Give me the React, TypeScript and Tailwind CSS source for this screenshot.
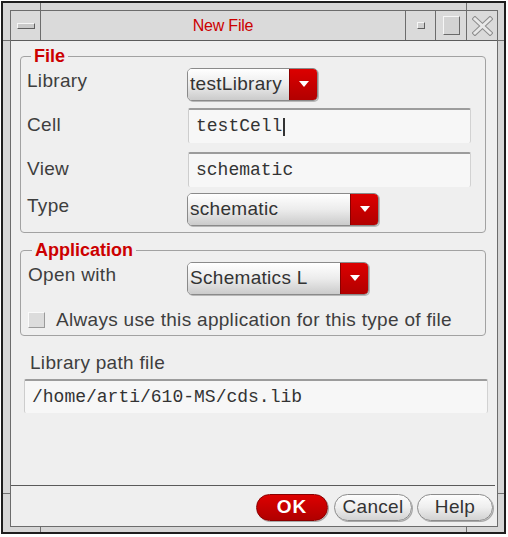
import type { ReactNode } from "react";

const sans = "font-['Liberation_Sans',Arial,sans-serif]";
const mono = "font-['Liberation_Mono','Courier_New',monospace]";

function Combo({ value, className }: { value: string; className: string }) {
  return (
    <div
      className={`flex h-[33px] overflow-hidden rounded-[5px] border border-[#8a8a8a] shadow-[1px_1px_0_#b8b8b8] ${className}`}
    >
      <div className="flex flex-1 items-center bg-linear-to-b from-[#ffffff] via-[#ececec] to-[#cbcbcb] pl-[2px] text-[19px] tracking-[0.3px] text-[#333]">
        {value}
      </div>
      <div className="flex w-[28px] items-center justify-center border-l border-[#8a0000] bg-linear-to-b from-[#dc0000] to-[#b20000]">
        <svg width="10" height="6" viewBox="0 0 10 6" className="-mt-[2px]">
          <path d="M0 0h10L5 6z" fill="#fff" />
        </svg>
      </div>
    </div>
  );
}

function Field({ children, className }: { children: ReactNode; className: string }) {
  return (
    <div
      className={`flex items-center rounded-[2px] border-t-2 border-r border-l border-t-[#9c9c9c] border-r-[#d2d2d2] border-l-[#cdcdcd] bg-[#f7f7f7] pl-[7px] text-[18px] text-[#333] ${mono} ${className}`}
    >
      {children}
    </div>
  );
}

function Legend({ children }: { children: string }) {
  return (
    <legend className="ml-[4px] px-[3px] text-[18px] leading-[20px] font-bold text-[#cc0000]">{children}</legend>
  );
}

function Row({ label, children, className }: { label: string; children: ReactNode; className: string }) {
  return (
    <div className={`flex items-center ${className}`}>
      <span className="w-[160px] text-[19px] tracking-[0.3px] text-[#3e3e3e]">{label}</span>
      {children}
    </div>
  );
}

function ComboRow({ label, children, className }: { label: string; children: ReactNode; className: string }) {
  return (
    <div className={`flex items-center ${className}`}>
      <span className="w-[160px] pb-[7px] text-[19px] tracking-[0.3px] text-[#3e3e3e]">{label}</span>
      {children}
    </div>
  );
}

function PillButton({ label, className }: { label: string; className: string }) {
  return (
    <div
      className={`flex h-[27px] items-center justify-center rounded-full border border-[#8c8c8c] bg-linear-to-b from-[#fdfdfd] via-[#eeeeee] to-[#d2d2d2] text-[19px] tracking-[0.3px] text-[#333] shadow-[1px_1px_0_#a8a8a8] ${className}`}
    >
      {label}
    </div>
  );
}

export default function App() {
  return (
    <div className={`h-[537px] w-[508px] bg-white pt-[1px] pl-[1px] ${sans}`}>
      <div className="relative flex h-[533px] w-[505px] flex-col border-2 border-[#1e1e1e] bg-[#d6d6d6] pt-[7px] pr-[6px] pb-[5px] pl-[7px]">
        {/* frame resize handle ticks */}
        <span className="absolute top-0 left-[37px] h-[7px] w-px bg-[#707070]" />
        <span className="absolute top-0 left-[463px] h-[7px] w-px bg-[#707070]" />
        <span className="absolute bottom-0 left-[37px] h-[5px] w-px bg-[#707070]" />
        <span className="absolute bottom-0 left-[463px] h-[5px] w-px bg-[#707070]" />
        <span className="absolute top-[37px] left-0 h-px w-[7px] bg-[#707070]" />
        <span className="absolute top-[490px] left-0 h-px w-[7px] bg-[#707070]" />
        <span className="absolute top-[37px] right-0 h-px w-[6px] bg-[#707070]" />
        <span className="absolute top-[490px] right-0 h-px w-[6px] bg-[#707070]" />

        <div className="flex flex-1 flex-col border border-[#6c6c6c]">
          {/* title bar */}
          <div className="flex h-[30px] border-b border-[#5c5c5c] bg-[#dadada]">
            <div className="flex w-[30px] items-center justify-center border-r border-[#6c6c6c]">
              <div className="h-[6px] w-[18px] border-t border-l border-t-[#f6f6f6] border-l-[#f6f6f6] border-r border-b border-r-[#5e5e5e] border-b-[#5e5e5e] bg-[#c9c9c9]" />
            </div>
            <div className="flex flex-1 items-center justify-center text-[16px] tracking-[-0.2px] text-[#cc0000]">
              New File
            </div>
            <div className="flex w-[30px] items-center justify-center border-l border-[#6c6c6c]">
              <div className="h-[7px] w-[8px] border-t border-l border-t-[#f6f6f6] border-l-[#f6f6f6] border-r border-b border-r-[#5e5e5e] border-b-[#5e5e5e] bg-[#cfcfcf]" />
            </div>
            <div className="flex w-[31px] items-center justify-center border-l border-[#6c6c6c]">
              <div className="h-[19px] w-[17px] border-t border-l border-t-[#f6f6f6] border-l-[#f6f6f6] border-r border-b border-r-[#6a6a6a] border-b-[#6a6a6a] bg-[#d3d3d3]" />
            </div>
            <div className="flex w-[31px] items-center justify-center border-l border-[#6c6c6c]">
              <svg width="21" height="20" viewBox="0 0 21 20">
                <path d="M3 3L18 17M18 3L3 17" stroke="#8c8c8c" strokeWidth="5" strokeLinecap="square" fill="none" />
                <path d="M3 3L18 17M18 3L3 17" stroke="#e8e8e8" strokeWidth="3" strokeLinecap="square" fill="none" />
              </svg>
            </div>
          </div>

          {/* client */}
          <div className="flex flex-1 flex-col bg-[#efefef]">
            <div className="flex flex-col pt-[5px] pl-[9px]">
              <fieldset className="w-[466px] rounded-[4px] border border-[#a2a2a2] pt-[2px] pb-[6px] pl-[6px]">
                <Legend>File</Legend>
                <ComboRow label="Library" className="h-[33px]">
                  <Combo value="testLibrary" className="w-[131px]" />
                </ComboRow>
                <Row label="Cell" className="mt-[7px] h-[35px]">
                  <Field className="ml-[1px] h-[35px] w-[283px]">
                    testCell
                    <span className="ml-[1px] inline-block h-[18px] w-[2px] bg-[#333]" />
                  </Field>
                </Row>
                <Row label="View" className="mt-[9px] h-[35px]">
                  <Field className="ml-[1px] h-[35px] w-[283px]">schematic</Field>
                </Row>
                <ComboRow label="Type" className="mt-[6px] h-[33px]">
                  <Combo value="schematic" className="w-[192px]" />
                </ComboRow>
              </fieldset>

              <fieldset className="mt-[7px] w-[466px] rounded-[4px] border border-[#a2a2a2] pt-[2px] pb-[4px] pl-[7px]">
                <Legend>Application</Legend>
                <ComboRow label="Open with" className="h-[33px]">
                  <Combo value="Schematics L" className="-ml-[1px] w-[182px]" />
                </ComboRow>
                <div className="mt-[14px] flex h-[22px] items-center">
                  <div className="h-[16px] w-[17px] border-t border-l border-t-[#fafafa] border-l-[#fafafa] border-r border-b border-r-[#9a9a9a] border-b-[#9a9a9a] bg-[#dcdcdc]" />
                  <span className="ml-[11px] text-[19px] tracking-[0.3px] text-[#3e3e3e]">
                    Always use this application for this type of file
                  </span>
                </div>
              </fieldset>

              <div className="mt-[16px] ml-[10px] h-[22px] text-[19px] leading-[22px] tracking-[0.3px] text-[#3e3e3e]">
                Library path file
              </div>
              <Field className="mt-[5px] ml-[4px] h-[34px] w-[464px]">/home/arti/610-MS/cds.lib</Field>
            </div>

            <div className="flex-1" />

            <div className="mr-[2px] flex h-[41px] justify-end gap-[5px] border-t border-[#5a5a5a] pt-[8px] pr-[2px]">
              <div className="mr-[1px] flex h-[27px] w-[72px] items-center justify-center rounded-full border border-[#8a0000] bg-linear-to-b from-[#dd0000] to-[#b00000] text-[19px] font-bold tracking-[1px] text-white shadow-[1px_1px_0_#a8a8a8]">
                OK
              </div>
              <PillButton label="Cancel" className="w-[78px]" />
              <PillButton label="Help" className="w-[76px]" />
            </div>
          </div>
        </div>
      </div>
    </div>
  );
}
